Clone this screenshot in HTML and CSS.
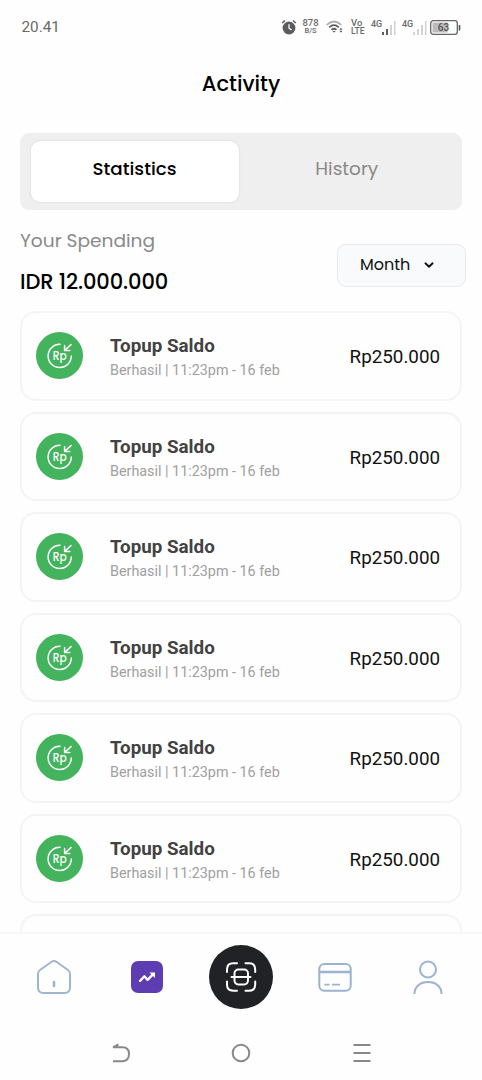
FILE: index.html
```html
<!DOCTYPE html>
<html lang="en">
<head>
<meta charset="utf-8">
<meta name="viewport" content="width=device-width, initial-scale=1">
<title>Activity</title>
<link rel="stylesheet" href="styles.css">
</head>
<body>
<div class="phone">
  <header class="status">
    <span class="clock">20.41</span>
    <div class="indicators">
      <svg class="alarm" width="16" height="16" viewBox="0 0 16 16"><circle cx="8" cy="9" r="6.4" fill="#5c5c5c"/><path d="M1.2 4L4 1.500M14.800 4L12 1.500" stroke="#5c5c5c" stroke-width="1.600"/><path d="M8 5.300V9.200l2.600 1.700" fill="none" stroke="#fff" stroke-width="1.300"/></svg>
      <span class="stack speed"><b>878</b><small>B/S</small></span>
      <svg class="wifi" width="18" height="14" viewBox="0 0 18 14"><g fill="none" stroke-width="1.700"><path d="M.8 4.800Q8 -1.800 15.200 4.800" stroke="#aaa"/><path d="M3.200 7.300Q8 3 12.800 7.300" stroke="#5c5c5c"/><path d="M5.500 9.800Q8 7.700 10.500 9.800" stroke="#5c5c5c"/></g><path d="M6.500 11h3L8 12.700zM13.300 9.800h3.200l-1.600-2zM13.300 10.800h3.200l-1.600 2z" fill="#5c5c5c"/></svg>
      <span class="stack volte"><b>Vo</b><small>LTE</small></span>
      <span class="cell"><b>4G</b><svg width="14" height="14" viewBox="0 0 14 14"><path d="M0 11h2v3H0zM4 8h2v6H4z" fill="#5c5c5c"/><path d="M8 4h2v10H8zM12 0h1.500v14H12z" fill="#d2d2d2"/></svg></span>
      <span class="cell"><b>4G</b><svg width="14" height="14" viewBox="0 0 14 14"><path d="M0 11h2v3H0zM4 8h2v6H4zM8 4h2v10H8zM12 0h1.500v14H12z" fill="#d2d2d2"/></svg></span>
      <svg class="battery" width="31" height="15" viewBox="0 0 31 15"><rect x="2.500" y="2.500" width="15" height="10" fill="#bbb"/><rect x=".7" y=".7" width="26.600" height="13.600" rx="2.600" fill="none" stroke="#666" stroke-width="1.300"/><path d="M29.500 5v5.500" stroke="#555" stroke-width="1.600"/><text class="charge" x="13.500" y="11.200" text-anchor="middle">63</text></svg>
    </div>
  </header>
  <main class="content">
    <h1 class="title">Activity</h1>
    <div class="tabs">
      <button class="tab active">Statistics</button>
      <button class="tab">History</button>
    </div>
    <section class="summary">
      <div><p class="caption">Your Spending</p><p class="total">IDR 12.000.000</p></div>
      <button class="period"><span>Month</span><svg width="10" height="7" viewBox="0 0 10 7"><path d="M1.400 1.300L5 4.800l3.600-3.500" fill="none" stroke="#111" stroke-width="1.900" stroke-linecap="round" stroke-linejoin="round"/></svg></button>
    </section>
    <ul class="list">
      <li class="card"><svg class="badge" viewBox="0 0 47 47"><circle class="disc" cx="23.500" cy="23.500" r="23.500"/><path class="ring" d="M24 12.300A11.600 11.600 0 1 0 35.300 24M35 12.600l-6.200 5.700M28.600 13.500v5h5.200"/><text class="rp" x="16.800" y="27.500" textLength="14" lengthAdjust="spacingAndGlyphs">Rp</text></svg><div class="info"><h2>Topup Saldo</h2><p>Berhasil | 11:23pm - 16 feb</p></div><span class="amount">Rp250.000</span></li>
      <li class="card"><svg class="badge" viewBox="0 0 47 47"><circle class="disc" cx="23.500" cy="23.500" r="23.500"/><path class="ring" d="M24 12.300A11.600 11.600 0 1 0 35.300 24M35 12.600l-6.200 5.700M28.600 13.500v5h5.200"/><text class="rp" x="16.800" y="27.500" textLength="14" lengthAdjust="spacingAndGlyphs">Rp</text></svg><div class="info"><h2>Topup Saldo</h2><p>Berhasil | 11:23pm - 16 feb</p></div><span class="amount">Rp250.000</span></li>
      <li class="card"><svg class="badge" viewBox="0 0 47 47"><circle class="disc" cx="23.500" cy="23.500" r="23.500"/><path class="ring" d="M24 12.300A11.600 11.600 0 1 0 35.300 24M35 12.600l-6.200 5.700M28.600 13.500v5h5.200"/><text class="rp" x="16.800" y="27.500" textLength="14" lengthAdjust="spacingAndGlyphs">Rp</text></svg><div class="info"><h2>Topup Saldo</h2><p>Berhasil | 11:23pm - 16 feb</p></div><span class="amount">Rp250.000</span></li>
      <li class="card"><svg class="badge" viewBox="0 0 47 47"><circle class="disc" cx="23.500" cy="23.500" r="23.500"/><path class="ring" d="M24 12.300A11.600 11.600 0 1 0 35.300 24M35 12.600l-6.200 5.700M28.600 13.500v5h5.200"/><text class="rp" x="16.800" y="27.500" textLength="14" lengthAdjust="spacingAndGlyphs">Rp</text></svg><div class="info"><h2>Topup Saldo</h2><p>Berhasil | 11:23pm - 16 feb</p></div><span class="amount">Rp250.000</span></li>
      <li class="card"><svg class="badge" viewBox="0 0 47 47"><circle class="disc" cx="23.500" cy="23.500" r="23.500"/><path class="ring" d="M24 12.300A11.600 11.600 0 1 0 35.300 24M35 12.600l-6.200 5.700M28.600 13.500v5h5.200"/><text class="rp" x="16.800" y="27.500" textLength="14" lengthAdjust="spacingAndGlyphs">Rp</text></svg><div class="info"><h2>Topup Saldo</h2><p>Berhasil | 11:23pm - 16 feb</p></div><span class="amount">Rp250.000</span></li>
      <li class="card"><svg class="badge" viewBox="0 0 47 47"><circle class="disc" cx="23.500" cy="23.500" r="23.500"/><path class="ring" d="M24 12.300A11.600 11.600 0 1 0 35.300 24M35 12.600l-6.200 5.700M28.600 13.500v5h5.200"/><text class="rp" x="16.800" y="27.500" textLength="14" lengthAdjust="spacingAndGlyphs">Rp</text></svg><div class="info"><h2>Topup Saldo</h2><p>Berhasil | 11:23pm - 16 feb</p></div><span class="amount">Rp250.000</span></li>
      <li class="card"></li>
    </ul>
  </main>
  <nav class="nav">
    <svg width="36" height="36" viewBox="0 0 36 36"><g fill="none" stroke="#a1b5ce" stroke-width="2" stroke-linecap="round" stroke-linejoin="round"><path d="M2 14.800Q2 12.400 4 11L15.300 3Q18 1.200 20.700 3L32 11Q34 12.400 34 14.800V28.500Q34 34 28.500 34H7.500Q2 34 2 28.500z"/><path d="M18 23v4" stroke-width="2.600"/></g></svg>
    <svg width="32" height="32" viewBox="0 0 32 32"><rect width="32" height="32" rx="7" fill="#5e3db3"/><path d="M9 20l4.400-4.700 3.200 3.600 5.800-6" fill="none" stroke="#fff" stroke-width="2.300" stroke-linecap="round" stroke-linejoin="round"/><path d="M18.500 11.500h5.500v5.500z" fill="#fff"/></svg>
    <svg width="64" height="64" viewBox="0 0 64 64"><circle cx="32" cy="32" r="32" fill="#202226"/><g fill="none" stroke="#fff" stroke-width="2" stroke-linecap="round"><path d="M18 27v-2.500Q18 18.300 24.200 18.300H28M36.500 18.300h3.500Q46.200 18.300 46.200 24.500V27M46.200 36.500v3Q46.200 45.700 40 45.700h-3.500M28 45.700h-3.800Q18 45.700 18 39.500v-3M22.500 32h19"/><rect x="25.500" y="24.600" width="13.500" height="14.800" rx="3.800"/></g></svg>
    <svg width="36" height="32" viewBox="0 0 36 32"><g fill="none" stroke="#9bb3d1" stroke-width="2"><rect x="2.300" y="3" width="31.400" height="26.700" rx="5"/><path d="M2.300 11h31.400" stroke-width="2.500"/><path d="M7.500 23.700h5M15 23.700h8" stroke-width="1.700"/></g></svg>
    <svg width="32" height="36" viewBox="0 0 32 36"><g fill="none" stroke="#9bb3d1" stroke-width="2"><circle cx="16" cy="10.500" r="8"/><path d="M2.500 35C2.500 27.500 8 23 16 23s13.500 4.500 13.500 12"/></g></svg>
  </nav>
  <footer class="system">
    <svg width="20" height="20" viewBox="0 0 20 20"><path d="M7.500 1.500L2 4.300h9.500Q18 4.300 18 11T11.500 18.200H2" fill="none" stroke="#888" stroke-width="2"/></svg>
    <svg width="20" height="20" viewBox="0 0 20 20"><circle cx="10" cy="10" r="8.300" fill="none" stroke="#888" stroke-width="2"/></svg>
    <svg width="20" height="20" viewBox="0 0 20 20"><path d="M1.500 2h17M1.500 10h17M1.500 18h17" stroke="#888" stroke-width="2"/></svg>
  </footer>
</div>
</body>
</html>
```

FILE: styles.css
```css
* { box-sizing: border-box; margin: 0; padding: 0; }
body { background: #fefefe; color: #000; font-family: Poppins, Inter, "Liberation Sans", sans-serif; }
button { font: inherit; border: 0; background: none; }
svg { flex: none; display: block; }
.phone { width: 482px; height: 1080px; display: flex; flex-direction: column; overflow: hidden; }

.status { height: 54px; flex: none; display: flex; justify-content: space-between; padding: 0 21px 0 21.500px; align-items: center; font-family: Roboto, sans-serif; color: #6a6a6a; }
.clock { font-size: 15.300px; }
.indicators { display: flex; align-items: center; }
.stack { display: flex; flex-direction: column; align-items: center; line-height: 8px; }
.stack b { font-size: 9.500px; font-weight: 500; }
.stack small { font-size: 7.500px; font-weight: 500; }
.speed { width: 17px; margin-left: 5px; }
.wifi { margin-left: 7px; }
.volte { width: 14px; margin-left: 7px; align-items: flex-start; }
.volte small { font-size: 8.500px; }
.cell { display: flex; margin-left: 6px; align-items: flex-start; }
.cell b { font-size: 9px; line-height: 8px; font-weight: 500; width: 11px; }
.cell svg { margin-top: 1px; }
.battery { margin-left: 3px; }
.charge { font: 500 10px Roboto, sans-serif; fill: #555; }

.content { flex: 0 0 878px; padding: 0 20px; overflow: hidden; }
.title { height: 58px; text-align: center; font-size: 21px; line-height: 60px; font-weight: 500; }
.tabs { height: 77.500px; margin-top: 20.500px; display: grid; grid-template-columns: 208px 1fr; padding: 8px 7px 8px 10.500px; background: #efefef; border-radius: 9px; }
.tab { color: #898989; font-size: 18.500px; line-height: 24px; padding-bottom: 4px; }
.tab.active { color: #000; font-size: 18.300px; font-weight: 500; background: #fff; border-radius: 9px; box-shadow: 0 0 2px #ccc; }
.summary { height: 101px; display: flex; justify-content: space-between; margin-right: -4px; }
.caption { margin-top: 17px; color: #898989; font-size: 18.600px; line-height: 28px; }
.total { margin-top: 12px; font-size: 21px; letter-spacing: -.1px; line-height: 30px; font-weight: 500; }
.period { width: 129px; height: 43px; margin-top: 34px; border: 1.500px solid #e7e9ed; border-radius: 9px; background: #f9fafc; display: flex; align-items: center; padding: 0 0 3px 22px; gap: 14px; font-size: 16px; color: #111; }
.period svg { margin-top: 3px; }
.list { list-style: none; display: grid; gap: 11px; }
.card { height: 89.500px; border: 2px solid #f4f4f4; border-radius: 16px; display: flex; align-items: center; padding: 0 20px 0 14px; font-family: Roboto, sans-serif; }
.badge { width: 47px; height: 47px; }
.disc { fill: #43b35d; }
.ring { fill: none; stroke: #fff; stroke-width: 1.500; stroke-linecap: round; stroke-linejoin: round; }
.rp { font: 500 11.500px Poppins, sans-serif; fill: #fff; }
.info { margin-left: 27px; flex: 1; padding-top: 4px; }
.info h2 { color: #424242; font-size: 18.800px; font-weight: 700; line-height: 26px; }
.info p { color: #a0a0a0; font-size: 14.350px; line-height: 23px; }
.amount { font-size: 18.800px; padding-top: 3px; color: #111; }

.nav { flex: none; height: 98px; display: grid; grid-template-columns: repeat(5, 93.700px); justify-content: center; justify-items: center; border-top: 2px solid #f7f7f7; padding-bottom: 10px; align-items: center; }
.system { flex: none; height: 50px; display: grid; grid-template-columns: repeat(3, 120.500px); justify-content: center; justify-items: center; align-items: center; padding-bottom: 4px; }
```
